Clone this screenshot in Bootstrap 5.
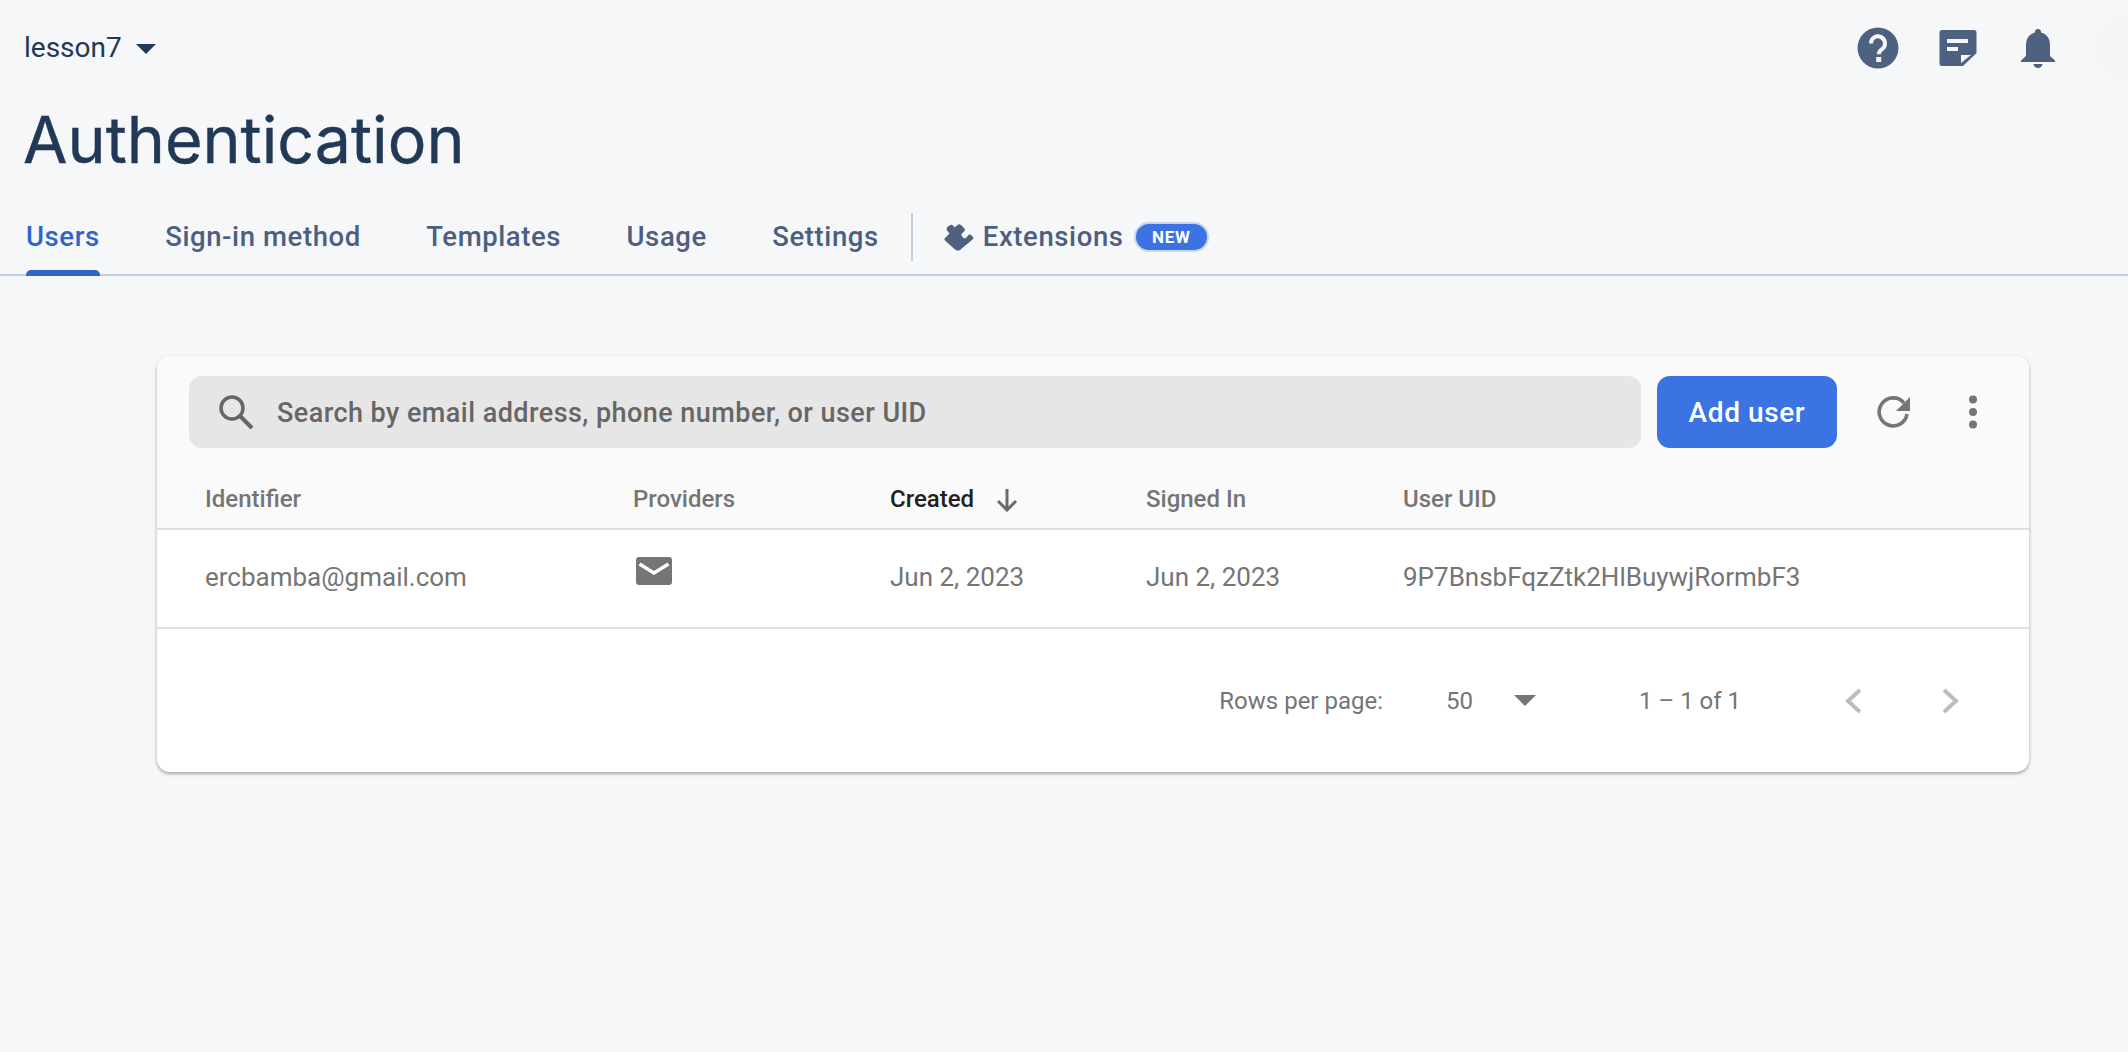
<!DOCTYPE html>
<html lang="en">
<head>
<meta charset="utf-8">
<title>Authentication</title>
<link href="https://cdn.jsdelivr.net/npm/bootstrap@5.3.0/dist/css/bootstrap.min.css" rel="stylesheet">
<style>
html,body{height:100%}
body{background:#f6f7f9;font-family:Roboto,"Liberation Sans",sans-serif;color:#213856;overflow:hidden}
.topbar{height:94px;padding:2px 24px 0}
.proj{font-size:28px;color:#213856;line-height:1}
.proj-caret{width:0;height:0;border-left:10px solid transparent;border-right:10px solid transparent;border-top:10px solid #213856;margin-left:14px;margin-top:2px}
.top-icons{gap:0;margin-right:-24px}
.top-slot{width:80px;display:flex;justify-content:center}
.ghost{width:64px;height:64px;border-radius:50%;background:#f5f5f5;margin-right:-30px;margin-left:16px}
.page-title{font-family:Inter,Roboto,sans-serif;font-size:64.5px;font-weight:400;color:#213856;margin:11px 0 0;padding-left:23px;line-height:70px;height:70px;-webkit-text-stroke:.4px #213856}
.tabbar{margin-top:41px;height:60px;border-bottom:2px solid #c3cfe0;padding-left:26px;align-items:stretch;flex-wrap:nowrap}
.tab-link{font-size:27.5px;font-weight:500;color:#4c5f80;display:flex;align-items:center;padding:0 0 16px;margin-right:65.4px;letter-spacing:.6px;position:relative;text-decoration:none}
.tab-link.on{color:#3065c8}
.tab-link.on::after{content:"";position:absolute;left:0;right:0;bottom:-2px;height:6px;background:#3065c8;border-radius:5px 5px 0 0}
.tab-sep{width:2px;height:48px;background:#c3cfe0;align-self:center;margin:-16px 31px 0 -33px}
.badge-new{background:#3b73e2;color:#fff;font-size:17px;font-weight:700;letter-spacing:.7px;border-radius:15px;padding:0 16.500px;height:30px;line-height:26px;border:2px solid #c9d5e6;margin-left:10px}
.ext-ico{margin-right:8.600px}
.userbox{margin:80px 0 0 157px;width:1872px;height:416px;border:0;border-radius:13px;box-shadow:0 2px 3px rgba(60,64,67,.35),0 1px 5px rgba(60,64,67,.12);overflow:hidden;background:#fff}
.boxhead{background:#fafafa;padding:20px 32px 0;}
.searchfld{flex:1;height:72px;background:#e6e6e6;border-radius:13px;padding:2px 0 0 29px;color:#666;font-size:27px;font-weight:500;letter-spacing:.45px}
.searchfld svg{margin:-2px 23px 0 0}
.addbtn{width:180px;height:72px;margin-left:16px;background:#3b73e2;border:0;color:#fff;font-size:28px;font-weight:500;border-radius:13px;letter-spacing:.6px;padding-top:8px}
.addbtn:hover{background:#3b73e2;color:#fff}
.tool-a{width:36px;margin-left:40px;display:flex}
.tool-b{width:16px;margin-left:52px;margin-right:16px;display:flex}
.utable{table-layout:fixed;width:100%;margin:0}
.utable th,.utable td{padding:0 0 0 48px;border-bottom:2px solid #e0e0e0;vertical-align:middle;color:#757575}
.utable th{height:81px;background:#fafafa;font-size:24px;font-weight:500;padding-top:22px;color:#757575}
.utable td{height:99px;font-size:26px;font-weight:400;background:#fff;padding-bottom:2px}
.utable th.pad,.utable td.pad{padding-left:0}
.c1{width:476px}.c2{width:257px}.c3{width:256px}.c4{width:257px}
.utable th.sorted{color:#212121}
.utable th.sorted svg{margin-left:21px;vertical-align:-5px}
.mailico{display:block;margin:-14px 0 0 3px}
.pager{height:145px;color:#757575;font-size:24px;justify-content:flex-end}
.rp-val{margin-left:63px;width:68px;font-size:24px}
.rp-caret{width:0;height:0;border-left:11px solid transparent;border-right:11px solid transparent;border-top:11px solid #757575}
.rp-range{margin-left:103px;width:205px;font-size:24px}
.pg-next{margin-left:80px;margin-right:69px;display:flex}
.pg-prev{display:flex}
</style>
</head>
<body>
<header class="topbar d-flex align-items-center justify-content-between">
  <div class="d-flex align-items-center"><span class="proj">lesson7</span><span class="proj-caret"></span></div>
  <div class="d-flex align-items-center top-icons">
    <div class="top-slot"><svg width="42" height="42" viewBox="0 0 42 42"><circle cx="21" cy="21" r="20.5" fill="#4e6180"/><path d="M14 16.500a7 7 0 1 1 11 5.600c-2 1.400-3.200 2.500-3.200 5.200" fill="none" stroke="#f6f7f9" stroke-width="4"/><rect x="19.200" y="30" width="5" height="5" fill="#f6f7f9"/></svg></div>
    <div class="top-slot"><svg width="38" height="38" viewBox="0 0 38 38"><path d="M3 1h32a2.500 2.500 0 0 1 2.500 2.500V24L24 37H3a2.500 2.500 0 0 1-2.500-2.500V3.500A2.500 2.500 0 0 1 3 1z" fill="#4e6180"/><rect x="8" y="10" width="21" height="4" fill="#f6f7f9"/><rect x="8" y="18" width="11" height="4" fill="#f6f7f9"/><path d="M22 34V26h10z" fill="#f6f7f9"/></svg></div>
    <div class="top-slot"><svg width="34" height="40" viewBox="0 0 34 40"><path d="M17 1a3 3 0 0 1 3 3v.6C26 6 29 11 29 17v11l5 4.500V34H0v-1.500L5 28V17C5 11 8 6 14 4.600V4a3 3 0 0 1 3-3z" fill="#4e6180"/><path d="M12.500 36h9a4.500 4 0 0 1-9 0z" fill="#4e6180"/></svg></div>
    <div class="ghost"></div>
  </div>
</header>
<h1 class="page-title">Authentication</h1>
<nav class="nav tabbar">
  <a class="tab-link on" href="#">Users</a>
  <a class="tab-link" href="#">Sign-in method</a>
  <a class="tab-link" href="#">Templates</a>
  <a class="tab-link" href="#">Usage</a>
  <a class="tab-link" href="#">Settings</a>
  <span class="tab-sep"></span>
  <a class="tab-link" href="#"><svg width="30" height="28" viewBox="0 0 30 28" class="ext-ico"><path d="M1 15 5.500 10.500 3.500 8A3 3 0 0 1 3.500 4L5.500 2.500A3 3 0 0 1 9.500 3L10.500 4.500 13.500 2A2.500 2.500 0 0 1 17 2L20 5A2.500 2.500 0 0 1 20 8.500L17.500 11A3.500 3.500 0 0 0 22 15L24.500 12A2 2 0 0 1 27 12L28.500 13.500A2 2 0 0 1 28.500 16.500L16 27Q13.500 28.500 11 26.500L1 17.500A1.800 1.800 0 0 1 1 15Z" fill="#4e6180"/></svg>Extensions<span class="badge-new">NEW</span></a>
</nav>
<main class="card userbox">
  <div class="boxhead d-flex align-items-center">
    <div class="searchfld d-flex align-items-center">
      <svg width="36" height="36" viewBox="0 0 36 36"><circle cx="14" cy="14" r="11" fill="none" stroke="#666" stroke-width="3.500"/><path d="M22 22 34 34" stroke="#666" stroke-width="4"/></svg>
      Search by email address, phone number, or user UID
    </div>
    <button class="btn addbtn" type="button">Add user</button>
    <span class="tool-a"><svg width="36" height="36" viewBox="0 0 36 36"><path d="M27 9A14 14 0 1 0 30 20" fill="none" stroke="#757575" stroke-width="3.600"/><path d="M33 3v14H19z" fill="#757575"/></svg></span>
    <span class="tool-b"><svg width="16" height="34" viewBox="0 0 16 34"><circle cx="8" cy="4.500" r="4" fill="#757575"/><circle cx="8" cy="17" r="4" fill="#757575"/><circle cx="8" cy="29.500" r="4" fill="#757575"/></svg></span>
  </div>
  <table class="table utable">
    <colgroup><col class="c1"><col class="c2"><col class="c3"><col class="c4"><col></colgroup>
    <thead>
      <tr><th>Identifier</th><th class="pad">Providers</th><th class="pad sorted">Created<svg width="24" height="24" viewBox="0 0 24 24"><path d="M12 1v21M3 13l9 9 9-9" fill="none" stroke="#6a6a6a" stroke-width="3"/></svg></th><th class="pad">Signed In</th><th class="pad">User UID</th></tr>
    </thead>
    <tbody>
      <tr><td>ercbamba@gmail.com</td><td class="pad"><svg width="36" height="28" viewBox="0 0 36 28" class="mailico"><rect width="36" height="28" rx="3" fill="#757575"/><path d="M3.500 7 18 16 32.500 7" fill="none" stroke="#fff" stroke-width="3.500"/></svg></td><td class="pad">Jun 2, 2023</td><td class="pad">Jun 2, 2023</td><td class="pad">9P7BnsbFqzZtk2HlBuywjRormbF3</td></tr>
    </tbody>
  </table>
  <div class="pager d-flex align-items-center">
    <span>Rows per page:</span><span class="rp-val">50</span><span class="rp-caret"></span><span class="rp-range">1 – 1 of 1</span>
    <span class="pg-prev"><svg width="18" height="26" viewBox="0 0 18 26"><path d="M16 2 4 13l12 11" fill="none" stroke="#bdbdbd" stroke-width="4"/></svg></span>
    <span class="pg-next"><svg width="18" height="26" viewBox="0 0 18 26"><path d="M2 2l12 11L2 24" fill="none" stroke="#bdbdbd" stroke-width="4"/></svg></span>
  </div>
</main>
<script src="https://cdn.jsdelivr.net/npm/bootstrap@5.3.0/dist/js/bootstrap.bundle.min.js"></script>
</body>
</html>
